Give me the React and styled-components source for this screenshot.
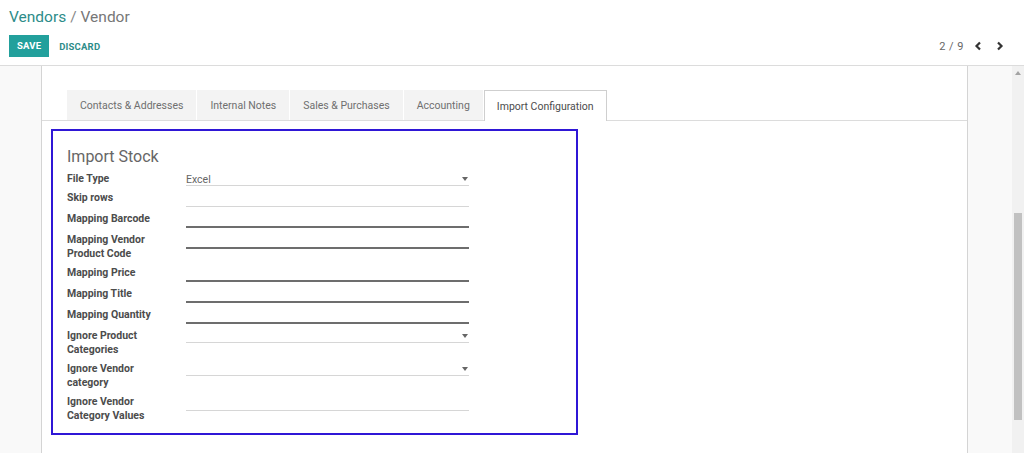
import React from "react";
import styled, { createGlobalStyle } from "styled-components";

const GlobalStyle = createGlobalStyle`
  html, body { margin: 0; padding: 0; background: #fff; }
  body { font-family: Roboto, "Noto Sans", "Liberation Sans", sans-serif; overflow: hidden; }
  * { box-sizing: border-box; }
`;

const Page = styled.div`
  width: 1024px;
  height: 453px;
  display: flex;
  flex-direction: column;
  overflow: hidden;
`;

const ControlPanel = styled.div`
  padding: 7px 16px 8px 9px;
  border-bottom: 1px solid #dcdcdc;
  background: #fff;
`;

const Breadcrumb = styled.div`
  font-size: 15.5px;
  line-height: 20px;
  color: #777;
  height: 20px;
  margin-bottom: 8px;
`;

const CrumbLink = styled.span`
  color: #2d8c89;
`;

const CrumbSep = styled.span`
  color: #888;
  margin: 0 4px 0 4px;
`;

const ButtonRow = styled.div`
  display: flex;
  align-items: center;
  justify-content: space-between;
  height: 22px;
`;

const Buttons = styled.div`
  display: flex;
  align-items: center;
  gap: 10px;
`;

const SaveButton = styled.button`
  height: 22px;
  padding: 0 8px;
  border: none;
  background: #22a09c;
  color: #fff;
  font-family: inherit;
  font-weight: 700;
  font-size: 9.5px;
  letter-spacing: 0.2px;
  line-height: 22px;
`;

const LinkButton = styled.button`
  height: 22px;
  padding: 0;
  border: none;
  background: transparent;
  color: #2d8c89;
  font-family: inherit;
  font-weight: 700;
  font-size: 9.5px;
  letter-spacing: 0.2px;
`;

const Pager = styled.div`
  display: flex;
  align-items: center;
  gap: 6px;
  font-size: 11px;
  color: #666;
`;

const PagerValue = styled.span`
  letter-spacing: 0.5px;
`;

const Chevron = styled.svg`
  width: 8px;
  height: 10px;
  display: block;
  margin: 0 4px;
`;

const ContentArea = styled.div`
  flex: 1;
  display: flex;
  background: #f9f9f9;
  overflow: hidden;
`;

const Main = styled.div`
  flex: 1;
  padding: 0 44px 0 41px;
`;

const Sheet = styled.div`
  background: #fff;
  border-left: 1px solid #d4d4d4;
  border-right: 1px solid #d4d4d4;
  padding-top: 24px;
  height: 100%;
`;

const TabBar = styled.div`
  display: flex;
  padding-left: 25px;
  border-bottom: 1px solid #dcdcdc;
  height: 31px;
`;

const Tab = styled.div`
  height: ${p => (p.$active ? "31px" : "30px")};
  padding: 0 ${p => (p.$active ? "12px" : "13px")};
  margin-right: 1px;
  display: flex;
  align-items: center;
  font-size: 10.5px;
  color: ${p => (p.$active ? "#4c4c4c" : "#6f6f6f")};
  background: ${p => (p.$active ? "#fff" : "#f3f3f3")};
  border: ${p => (p.$active ? "1px solid #cfcfcf" : "none")};
  border-bottom: none;
  white-space: nowrap;
`;

const Panel = styled.div`
  padding: 8px 9px;
`;

const FormBox = styled.div`
  width: 527px;
  border: 2px solid #2f17d6;
  padding: 16px 14px 10px;
`;

const Heading = styled.div`
  font-size: 16px;
  line-height: 20px;
  color: #666;
  margin-bottom: 5px;
`;

const FormGrid = styled.div`
  display: grid;
  grid-template-columns: 119px 283px;
  row-gap: 5px;
  align-items: start;
`;

const Label = styled.div`
  font-size: 10.5px;
  font-weight: 700;
  line-height: 14px;
  color: #4c4c4c;
  padding-right: 19px;
`;

const Field = styled.div`
  position: relative;
  height: ${p => (p.$select ? "14px" : "16px")};
  border-bottom: ${p => (p.$strong ? "2px solid #6d6d6d" : "1px solid #d6d6d6")};
  font-size: 10.5px;
  line-height: 15px;
  color: #666;
`;

const Caret = styled.span`
  position: absolute;
  right: 1px;
  top: 5px;
  width: 0;
  height: 0;
  border-top: 4px solid #666;
  border-left: 3px solid transparent;
  border-right: 3px solid transparent;
`;

const Scrollbar = styled.div`
  width: 12px;
  background: #f1f1f1;
  display: flex;
  flex-direction: column;
  align-items: center;
`;

const ScrollArrow = styled.span`
  margin-top: 5px;
  width: 0;
  height: 0;
  border-bottom: 4px solid #a3a3a3;
  border-left: 3px solid transparent;
  border-right: 3px solid transparent;
`;

const ScrollThumb = styled.div`
  margin-top: 138px;
  width: 8px;
  height: 207px;
  background: #c1c1c1;
`;

const rows = [
  { label: "File Type", select: true, value: "Excel" },
  { label: "Skip rows" },
  { label: "Mapping Barcode", strong: true },
  { label: "Mapping Vendor Product Code", strong: true },
  { label: "Mapping Price", strong: true },
  { label: "Mapping Title", strong: true },
  { label: "Mapping Quantity", strong: true },
  { label: "Ignore Product Categories", select: true },
  { label: "Ignore Vendor category", select: true },
  { label: "Ignore Vendor Category Values" },
];

const tabs = [
  "Contacts & Addresses",
  "Internal Notes",
  "Sales & Purchases",
  "Accounting",
  "Import Configuration",
];

export default function App() {
  return (
    <Page>
      <GlobalStyle />
      <ControlPanel>
        <Breadcrumb>
          <CrumbLink>Vendors</CrumbLink>
          <CrumbSep>/</CrumbSep>
          <span>Vendor</span>
        </Breadcrumb>
        <ButtonRow>
          <Buttons>
            <SaveButton>SAVE</SaveButton>
            <LinkButton>DISCARD</LinkButton>
          </Buttons>
          <Pager>
            <PagerValue>2 / 9</PagerValue>
            <Chevron viewBox="0 0 8 10">
              <polyline points="6,1.5 2.5,5 6,8.5" fill="none" stroke="#333" strokeWidth="2.2" />
            </Chevron>
            <Chevron viewBox="0 0 8 10">
              <polyline points="2,1.5 5.5,5 2,8.5" fill="none" stroke="#333" strokeWidth="2.2" />
            </Chevron>
          </Pager>
        </ButtonRow>
      </ControlPanel>
      <ContentArea>
        <Main>
          <Sheet>
            <TabBar>
              {tabs.map((t, i) => (
                <Tab key={t} $active={i === tabs.length - 1}>
                  {t}
                </Tab>
              ))}
            </TabBar>
            <Panel>
              <FormBox>
                <Heading>Import Stock</Heading>
                <FormGrid>
                  {rows.map(r => (
                    <React.Fragment key={r.label}>
                      <Label>{r.label}</Label>
                      <Field $select={r.select} $strong={r.strong}>
                        {r.value}
                        {r.select && <Caret />}
                      </Field>
                    </React.Fragment>
                  ))}
                </FormGrid>
              </FormBox>
            </Panel>
          </Sheet>
        </Main>
        <Scrollbar>
          <ScrollArrow />
          <ScrollThumb />
        </Scrollbar>
      </ContentArea>
    </Page>
  );
}
